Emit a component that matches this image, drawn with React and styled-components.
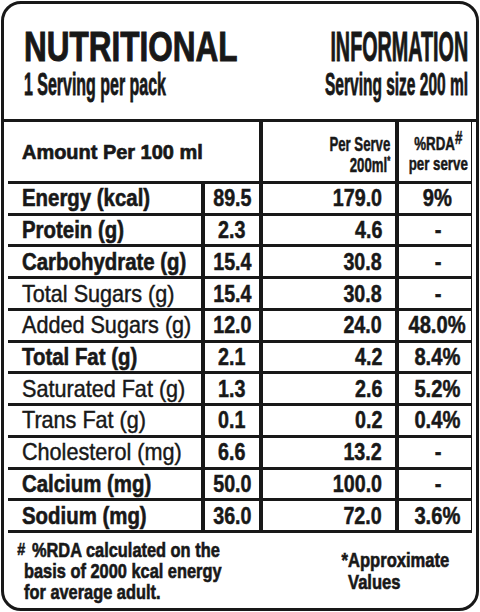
import React from "react";
import styled, { createGlobalStyle } from "styled-components";

const INK = "#181818";

const GlobalStyle = createGlobalStyle`
  html, body {
    margin: 0;
    padding: 0;
    background: #fff;
  }
  body {
    font-family: "Liberation Sans", Arial, sans-serif;
    color: ${INK};
  }
  * {
    box-sizing: border-box;
  }
`;

const rows = [
  { name: "Energy (kcal)", per100: "89.5", serve: "179.0", rda: "9%", bold: true },
  { name: "Protein (g)", per100: "2.3", serve: "4.6", rda: "-", bold: true },
  { name: "Carbohydrate (g)", per100: "15.4", serve: "30.8", rda: "-", bold: true },
  { name: "Total Sugars (g)", per100: "15.4", serve: "30.8", rda: "-" },
  { name: "Added Sugars (g)", per100: "12.0", serve: "24.0", rda: "48.0%" },
  { name: "Total Fat (g)", per100: "2.1", serve: "4.2", rda: "8.4%", bold: true },
  { name: "Saturated Fat (g)", per100: "1.3", serve: "2.6", rda: "5.2%" },
  { name: "Trans Fat (g)", per100: "0.1", serve: "0.2", rda: "0.4%" },
  { name: "Cholesterol (mg)", per100: "6.6", serve: "13.2", rda: "-" },
  { name: "Calcium (mg)", per100: "50.0", serve: "100.0", rda: "-", bold: true },
  { name: "Sodium (mg)", per100: "36.0", serve: "72.0", rda: "3.6%", bold: true },
];

export default function App() {
  return (
    <>
      <GlobalStyle />
      <Label>
        <Header>
          <HeadCol>
            <Title $sx={0.75}>NUTRITIONAL</Title>
            <Sub $sx={0.515}>1 Serving per pack</Sub>
          </HeadCol>
          <HeadCol $right>
            <Title $sx={0.47} $right>
              INFORMATION
            </Title>
            <Sub $sx={0.5} $right>
              Serving size 200 ml
            </Sub>
          </HeadCol>
        </Header>

        <Table>
          <AmountCell>
            <Squeeze $sx={0.95}>Amount Per 100 ml</Squeeze>
          </AmountCell>
          <ServeHead>
            <Squeeze $sx={0.66} $origin="right">
              Per Serve
              <br />
              200ml<Star>*</Star>
            </Squeeze>
          </ServeHead>
          <RdaHead>
            <Squeeze $sx={0.7} $origin="center">
              %RDA<Hash>#</Hash>
              <br />
              per serve
            </Squeeze>
          </RdaHead>

          {rows.map((r) => (
            <React.Fragment key={r.name}>
              <NameCell $bold={r.bold}>
                <Squeeze $sx={r.bold ? 0.85 : 0.9}>{r.name}</Squeeze>
              </NameCell>
              <ValueCell>
                <Squeeze $sx={0.82} $origin="center">
                  {r.per100}
                </Squeeze>
              </ValueCell>
              <ServeCell>
                <Squeeze $sx={0.82} $origin="right">
                  {r.serve}
                </Squeeze>
              </ServeCell>
              <RdaCell>
                <Squeeze $sx={0.84} $origin="center">
                  {r.rda}
                </Squeeze>
              </RdaCell>
            </React.Fragment>
          ))}
        </Table>

        <Footer>
          <FootLeft>
            <Squeeze $sx={0.84}>
              <FootHash>#</FootHash>%RDA calculated on the
              <br />
              basis of 2000 kcal energy
              <br />
              for average adult.
            </Squeeze>
          </FootLeft>
          <FootRight>
            <Squeeze $sx={0.85}>
              *Approximate
              <br />
              Values
            </Squeeze>
          </FootRight>
        </Footer>
      </Label>
    </>
  );
}

const Label = styled.div`
  margin: 1px;
  width: 478px;
  height: 610px;
  border: 3px solid ${INK};
  border-radius: 20px;
  display: flex;
  flex-direction: column;
  overflow: hidden;
  background: #fff;
  -webkit-text-stroke: 0.5px ${INK};
`;

const Header = styled.div`
  height: 118px;
  flex: none;
  padding: 22px 8px 0 20px;
  border-bottom: 3px solid ${INK};
  display: grid;
  grid-template-columns: minmax(0, 1fr) minmax(0, 1fr);
`;

const HeadCol = styled.div`
  display: flex;
  flex-direction: column;
  align-items: ${(p) => (p.$right ? "flex-end" : "flex-start")};
  min-width: 0;
`;

const Title = styled.div`
  font-size: 42px;
  line-height: 42px;
  font-weight: 700;
  white-space: nowrap;
  -webkit-text-stroke: 1px ${INK};
  transform: scaleX(${(p) => p.$sx});
  transform-origin: ${(p) => (p.$right ? "right" : "left")} center;
`;

const Sub = styled.div`
  margin-top: 1px;
  font-size: 31px;
  line-height: 31px;
  font-weight: 700;
  white-space: nowrap;
  -webkit-text-stroke: 0.8px ${INK};
  transform: scaleX(${(p) => p.$sx});
  transform-origin: ${(p) => (p.$right ? "right" : "left")} center;
`;

const Squeeze = styled.span`
  display: inline-block;
  white-space: nowrap;
  transform: scaleX(${(p) => p.$sx ?? 0.82});
  transform-origin: ${(p) => p.$origin ?? "left"} center;
  text-align: ${(p) => p.$origin ?? "left"};
`;

const Table = styled.div`
  flex: none;
  margin: 0 4px;
  height: 411px;
  display: grid;
  grid-template-columns: 193px 54px 132px 72px;
  grid-template-rows: 59px repeat(11, 1fr);
  column-gap: 4px;
  row-gap: 3px;
  background: ${INK};
  border-bottom: 3px solid ${INK};
`;

const Cell = styled.div`
  background: #fff;
  display: flex;
  align-items: center;
  min-width: 0;
  font-size: 24px;
  line-height: 28px;
  font-weight: 700;
`;

const AmountCell = styled(Cell)`
  grid-column: span 2;
  padding-left: 14px;
  font-size: 21px;
  -webkit-text-stroke: 0.7px ${INK};
`;

const ServeHead = styled(Cell)`
  justify-content: flex-end;
  padding: 7px 5px 0 0;
  font-size: 20px;
  line-height: 21px;
`;

const RdaHead = styled(Cell)`
  justify-content: center;
  padding: 5px 0 0 6px;
  font-size: 19px;
  line-height: 20px;
`;

const Star = styled.sup`
  font-size: 12px;
  line-height: 0;
  vertical-align: 7px;
`;

const Hash = styled.sup`
  font-size: 19px;
  line-height: 0;
  vertical-align: 6px;
`;

const NameCell = styled(Cell)`
  padding-left: 14px;
  font-weight: ${(p) => (p.$bold ? 700 : 400)};
  -webkit-text-stroke: ${(p) => (p.$bold ? 0.6 : 0.45)}px ${INK};
`;

const ValueCell = styled(Cell)`
  justify-content: center;
`;

const ServeCell = styled(Cell)`
  justify-content: flex-end;
  padding-right: 13px;
`;

const RdaCell = styled(Cell)`
  justify-content: center;
  padding-left: 5px;
`;

const Footer = styled.div`
  flex: 1;
  display: grid;
  grid-template-columns: 344px 1fr;
  font-size: 19.5px;
  font-weight: 700;
  -webkit-text-stroke: 0.6px ${INK};
`;

const FootLeft = styled.div`
  padding: 7px 0 0 20px;
  line-height: 21px;
`;

const FootHash = styled.sup`
  font-size: 17px;
  line-height: 0;
  vertical-align: 2px;
  margin-left: -8px;
  margin-right: 8px;
`;

const FootRight = styled.div`
  align-self: center;
  line-height: 22px;
  padding-left: 7.6px;
  text-indent: -7.6px;
`;
